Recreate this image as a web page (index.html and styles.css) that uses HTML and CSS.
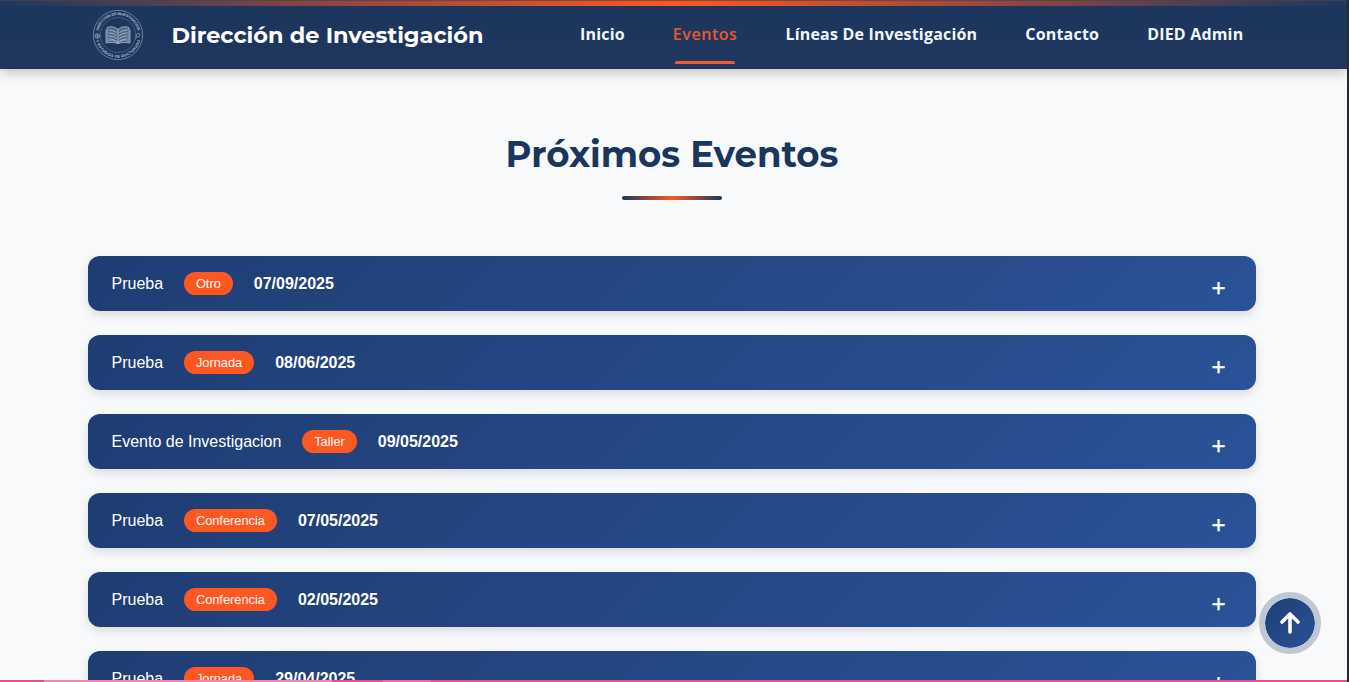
FILE: index.html
```html
<!DOCTYPE html>
<html lang="es">
<head>
<meta charset="utf-8">
<title>Próximos Eventos</title>
<link rel="stylesheet" href="styles.css">
</head>
<body>
<div class="page">
  <header class="header">
    <div class="brand">
      <svg class="logo" viewBox="0 0 52 52" width="52" height="52" fill="none" stroke="#a9bdd3">
        <defs>
          <path id="top" d="M6 26a20 20 0 0 1 40 0"/>
          <path id="bottom" d="M3.4 26a22.600 22.600 0 0 0 45.200 0"/>
        </defs>
        <circle cx="26" cy="26" r="24.6" stroke-width=".9" opacity=".6"/>
        <circle cx="26" cy="26" r="17.500" stroke-width=".6" opacity=".5"/>
        <g class="seal-text">
          <text><textPath href="#top" startOffset="50%" text-anchor="middle" textLength="54">DIRECCIÓN DE INVESTIGACIÓN</textPath></text>
          <text><textPath href="#bottom" startOffset="50%" text-anchor="middle" textLength="60">Y ESTUDIOS DE DOCTORADO</textPath></text>
        </g>
        <g stroke-width=".6"><circle cx="5.3" cy="27" r="2.3"/><path d="M3 27h4.6M5.3 24.7v4.6"/><circle cx="46.2" cy="26.2" r="1.8"/><path d="M45 28l-2 2.2"/></g>
        <path d="M15 18.500c4-1.400 7.500-.8 11 1.800 3.500-2.600 7-3.200 11-1.800v14c-4-1.300-7.500-.8-11 1.300-3.500-2.100-7-2.600-11-1.300z" fill="#8199b5" fill-opacity=".5" stroke-width=".8"/>
        <path d="M26 20v14M16.500 21c3 0 5.500.8 8 2.500M16.500 24c3 0 5.500.8 8 2.500M16.500 27c3 0 5.500.8 8 2.500M16.500 30c3 0 5.500.8 8 2M35.500 21c-3 0-5.500.8-8 2.500M35.500 24c-3 0-5.500.8-8 2.500M35.500 27c-3 0-5.500.8-8 2.500M35.500 30c-3 0-5.500.8-8 2M14 20.500v13.500c4-.8 8-.8 12 .6 4-1.400 8-1.400 12-.6v-13.500" stroke="#c5d4e3" stroke-width=".7"/>
      </svg>
      <span class="brand-name">Dirección de Investigación</span>
    </div>
    <nav class="nav">
      <a>Inicio</a>
      <a class="active">Eventos</a>
      <a>Líneas De Investigación</a>
      <a>Contacto</a>
      <a>DIED Admin</a>
    </nav>
  </header>
  <main class="main">
    <h1 class="title">Próximos Eventos</h1>
    <div class="rule"></div>
    <div class="events">
      <div class="event"><span>Prueba</span><span class="tag">Otro</span><b>07/09/2025</b><i class="plus">+</i></div>
      <div class="event"><span>Prueba</span><span class="tag">Jornada</span><b>08/06/2025</b><i class="plus">+</i></div>
      <div class="event"><span>Evento de Investigacion</span><span class="tag">Taller</span><b>09/05/2025</b><i class="plus">+</i></div>
      <div class="event"><span>Prueba</span><span class="tag">Conferencia</span><b>07/05/2025</b><i class="plus">+</i></div>
      <div class="event"><span>Prueba</span><span class="tag">Conferencia</span><b>02/05/2025</b><i class="plus">+</i></div>
      <div class="event"><span>Prueba</span><span class="tag">Jornada</span><b>29/04/2025</b><i class="plus">+</i></div>
    </div>
  </main>
  <button class="to-top" aria-label="Subir">
    <svg width="22" height="24" viewBox="0 0 22 24" fill="none" stroke="#fff" stroke-width="3.600" stroke-linecap="round" stroke-linejoin="round"><path d="M11 21V3M3 11l8-8 8 8"/></svg>
  </button>
  <div class="strip"></div>
</div>
</body>
</html>
```
FILE: styles.css
```css
* { box-sizing: border-box; }
body { margin: 0; background: #f8f9fb; font-family: "Liberation Sans", Arial, sans-serif; overflow: hidden; }
.page { position: relative; height: 682px; overflow: hidden; border-right: 2px solid #292a2d; }
.header {
  position: relative; height: 69px; padding: 0 103.600px 0 92px;
  display: flex; justify-content: space-between;
  background: linear-gradient(#1b365d, #20365f);
  box-shadow: 0 3px 12px rgba(0,0,0,.24);
}
.header::before {
  content: ""; position: absolute; inset: 0 0 auto; height: 6px;
  background: linear-gradient(rgba(70,70,75,.7) 1px, transparent 1px), linear-gradient(90deg, #1f375e, #ff5722 50%, #1f375e);
}
.brand { display: flex; align-items: center; height: 69px; }
.logo { flex: none; margin-right: 27.500px; }
.seal-text { fill: #b9c9da; stroke: none; font: bold 3.6px "Liberation Sans", Arial, sans-serif; }
.brand-name { font: 700 22.4px/30px Montserrat, Inter, sans-serif; color: #fff; white-space: nowrap; }
.nav { display: flex; gap: 48px; padding-top: 22px; font: 700 16px/24px "Open Sans", sans-serif; letter-spacing: .19px; color: #f2f7fc; white-space: nowrap; }
.nav a { height: 42px; }
.nav .active { position: relative; color: #e8592f; font-weight: 600; letter-spacing: .55px; }
.nav .active::after { content: ""; position: absolute; left: 2px; right: 2px; bottom: 0; height: 3px; border-radius: 2px 2px 0 0; background: #f05a30; }
.main { width: 1168px; margin-left: 88px; padding-top: 62px; }
.title { margin: 0; text-align: center; font: 700 35.5px/48px Montserrat, Inter, sans-serif; color: #1b365d; }
.rule { width: 100px; height: 4px; margin: 17px auto 56px; border-radius: 2px; background: linear-gradient(90deg, #1b365d, #ff5722, #1b365d); }
.events { display: flex; flex-direction: column; gap: 24px; }
.event {
  display: flex; align-items: center; height: 55px; flex: none; padding: 0 30px 0 23.500px;
  border-radius: 12px; color: #fff; font-size: 16px;
  background: linear-gradient(135deg, #1f3d73, #2a5298);
  box-shadow: 0 4px 10px rgba(0,0,0,.12);
}
.tag { margin: 0 21px 0 20.800px; padding: 0 12px; border-radius: 12px; background: #ff5722; font-size: 12.8px; line-height: 23px; }
.plus { margin: 9px .400px 0 auto; font: 400 24px/24px "Liberation Sans", Arial, sans-serif; -webkit-text-stroke: .4px #fff; }
.to-top {
  position: absolute; left: 1259px; top: 592px; width: 62px; height: 62px; padding: 0;
  border: 6px solid #bec7d2; border-radius: 50%;
  background: linear-gradient(135deg, #1f3d73, #2a5298) padding-box;
  display: flex; align-items: center; justify-content: center;
}
.strip {
  position: absolute; left: 0; right: -2px; bottom: 0; height: 2px;
  background: linear-gradient(90deg, #e5508b 44px, #f283ad 44px 332px, #e5508b 332px 383px, #ed6a9b 383px 431px, #e5508b 431px);
}
```
